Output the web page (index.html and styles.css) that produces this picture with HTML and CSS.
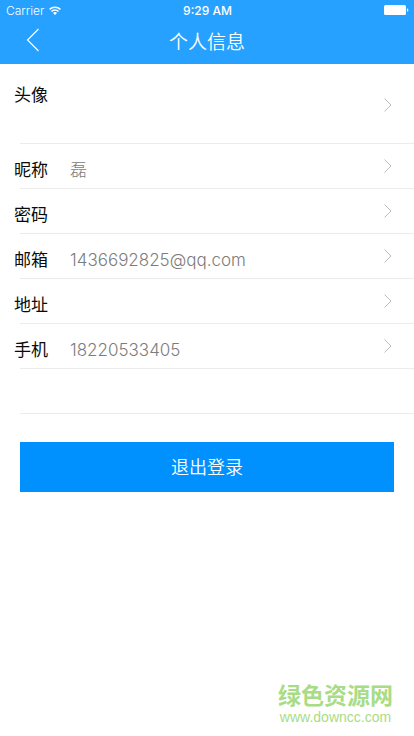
FILE: index.html
```html
<!DOCTYPE html>
<html lang="zh-CN">
<head>
<meta charset="utf-8">
<meta name="viewport" content="width=device-width, initial-scale=1">
<title>个人信息</title>
<link rel="stylesheet" href="styles.css">
</head>
<body>
<div class="screen">
  <header class="header">
    <div class="status">
      <div class="carrier">
        <span>Carrier</span>
        <svg class="wifi" viewBox="0 0 12 9" aria-hidden="true">
          <path d="M.6 3.4a7.6 7.6 0 0 1 10.8 0M2.5 5.4a4.9 4.9 0 0 1 7 0" fill="none" stroke="currentColor" stroke-width="1.5"/>
          <path d="M6 9 4 6.9a2.9 2.9 0 0 1 4 0z" fill="currentColor"/>
        </svg>
      </div>
      <time class="clock">9:29 AM</time>
      <svg class="battery" viewBox="0 0 25 10" aria-hidden="true">
        <rect width="22" height="10" rx="1.5" fill="currentColor"/>
        <path d="M23 3.2c1.8.3 1.8 3.3 0 3.6z" fill="currentColor"/>
      </svg>
    </div>
    <nav class="navbar">
      <button class="back" type="button" aria-label="返回">
        <svg viewBox="0 0 14 24" aria-hidden="true"><path d="M12.5 1 1.5 12l11 11" fill="none" stroke="currentColor" stroke-width="1.1"/></svg>
      </button>
      <h1 class="title">个人信息</h1>
    </nav>
  </header>
  <main>
    <ul class="list">
      <li><a class="row row-avatar" href="#avatar"><span class="label">头像</span><span class="value"></span><svg class="chevron" viewBox="0 0 8 14" aria-hidden="true"><path d="m.5.5 6.5 6.5-6.5 6.5"/></svg></a></li>
      <li><a class="row" href="#nickname"><span class="label">昵称</span><span class="value">磊</span><svg class="chevron" viewBox="0 0 8 14" aria-hidden="true"><path d="m.5.5 6.5 6.5-6.5 6.5"/></svg></a></li>
      <li><a class="row" href="#password"><span class="label">密码</span><span class="value"></span><svg class="chevron" viewBox="0 0 8 14" aria-hidden="true"><path d="m.5.5 6.5 6.5-6.5 6.5"/></svg></a></li>
      <li><a class="row" href="#email"><span class="label">邮箱</span><span class="value">1436692825@qq.com</span><svg class="chevron" viewBox="0 0 8 14" aria-hidden="true"><path d="m.5.5 6.5 6.5-6.5 6.5"/></svg></a></li>
      <li><a class="row" href="#address"><span class="label">地址</span><span class="value"></span><svg class="chevron" viewBox="0 0 8 14" aria-hidden="true"><path d="m.5.5 6.5 6.5-6.5 6.5"/></svg></a></li>
      <li><a class="row" href="#phone"><span class="label">手机</span><span class="value">18220533405</span><svg class="chevron" viewBox="0 0 8 14" aria-hidden="true"><path d="m.5.5 6.5 6.5-6.5 6.5"/></svg></a></li>
      <li class="row" aria-hidden="true"></li>
    </ul>
    <button class="logout" type="button">退出登录</button>
  </main>
  <footer class="watermark">
    <strong class="site">绿色资源网</strong>
    <span class="url">www.downcc.com</span>
  </footer>
</div>
</body>
</html>
```

FILE: styles.css
```css
* {
  box-sizing: border-box;
}

body {
  margin: 0;
  background: #fff;
  color: #0a0a0a;
  font-family: Inter, "Noto Sans CJK SC", sans-serif;
}

.screen {
  display: flex;
  flex-direction: column;
  min-height: 100vh;
}

.header {
  background: #27a1ff;
  color: #fff;
}

.status {
  display: grid;
  grid-template-columns: 1fr auto 1fr;
  align-items: center;
  height: 20px;
  padding: 0 5px 0 6px;
  font-size: 12px;
}

.carrier {
  display: flex;
  align-items: center;
  gap: 5px;
  font-weight: 300;
}

.wifi {
  width: 12px;
  height: 9px;
}

.clock {
  font-weight: 500;
}

.battery {
  justify-self: end;
  width: 25px;
  height: 10px;
}

.navbar {
  display: grid;
  grid-template-columns: 64px 1fr 64px;
  align-items: center;
  height: 44px;
}

.back {
  display: flex;
  padding: 0 0 4px 26px;
  border: 0;
  background: none;
  color: inherit;
}

.back svg {
  width: 14px;
  height: 24px;
}

.title {
  margin: 0;
  padding-top: 2px;
  font-size: 19px;
  font-weight: 350;
  line-height: 42px;
  text-align: center;
}

.list {
  margin: 0;
  padding: 0;
  list-style: none;
}

.row {
  display: flex;
  align-items: center;
  height: 45px;
  padding: 0 22px 2px 14px;
  background: linear-gradient(#ececec, #ececec) 20px 100% / 100% 1px no-repeat;
  color: inherit;
  font-size: 17px;
  line-height: 24px;
  text-decoration: none;
}

.row-avatar {
  height: 80px;
  padding-top: 4px;
}

.label {
  width: 56px;
  padding-top: 8px;
}

.row-avatar .label {
  align-self: flex-start;
  padding-top: 15px;
}

.value {
  flex: 1;
  padding-top: 8px;
  color: #7c7c7c;
  font-weight: 300;
}

.chevron {
  width: 8px;
  height: 14px;
  fill: none;
  stroke: #bdbdbd;
}

.logout {
  display: block;
  width: calc(100% - 40px);
  height: 50px;
  margin: 28px 20px 0;
  padding: 2px 0 0;
  border: 0;
  background: #0091ff;
  color: #fff;
  font: 350 18px/48px Inter, "Noto Sans CJK SC", sans-serif;
}

.watermark {
  display: flex;
  flex-direction: column;
  align-items: center;
  align-self: flex-end;
  margin-top: auto;
  padding: 0 21px 10px 0;
  color: #a9dc86;
}

.site {
  font-size: 23px;
  font-weight: 700;
  line-height: 24px;
}

.url {
  font-family: "Liberation Sans", sans-serif;
  font-size: 14px;
  line-height: 18px;
}
```
